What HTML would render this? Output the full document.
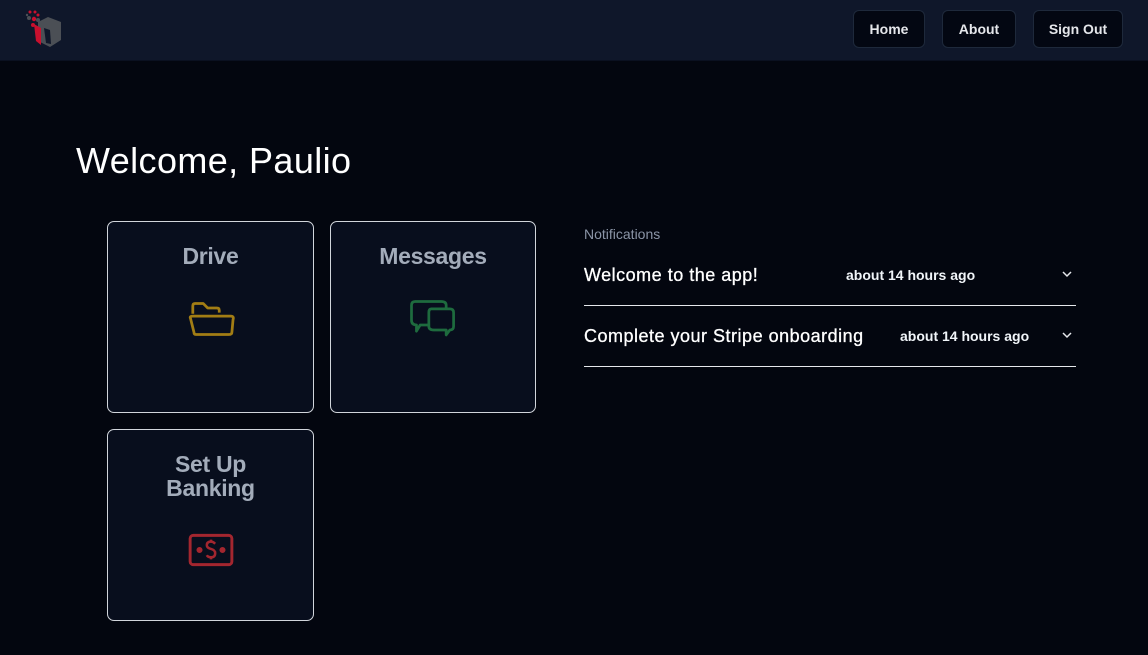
<!DOCTYPE html>
<html><head><style>
*{box-sizing:border-box;margin:0;padding:0}
body{width:1148px;height:655px;background:#03060f;font-family:"Liberation Sans",sans-serif;color:#fff;position:relative;overflow:hidden}
.hdr{position:absolute;left:0;top:0;width:1148px;height:61px;background:#0f172a;border-bottom:1px solid #0a1020}
.btn{position:absolute;top:10px;height:38px;background:#030712;border:1px solid #1e293b;border-radius:6px;color:#e5e7eb;font-size:14px;font-weight:bold;display:flex;align-items:center;justify-content:center}
h1{position:absolute;left:76px;top:140px;font-size:36px;font-weight:normal;color:#fff;letter-spacing:0.4px}
.card{position:absolute;width:207px;height:192px;background:#080e1d;border:1px solid #d1d5db;border-radius:7px;text-align:center}
.card .t{position:absolute;left:0;right:0;top:22px;font-size:23px;font-weight:bold;color:#a3acba;line-height:24px;letter-spacing:-0.3px}
.card svg{position:absolute}
.lbl{position:absolute;left:584px;top:226px;font-size:14px;color:#8b95a7}
.row{position:absolute;left:584px;width:492px;height:61px;border-bottom:1px solid #e5e7eb}
.row .a{position:absolute;left:0;top:20px;font-size:18px;color:#fff;letter-spacing:0.5px;-webkit-text-stroke:0.3px #fff}
.row .b{position:absolute;top:22px;font-size:14px;font-weight:bold;color:#f1f5f9}
.row svg{position:absolute;right:3px;top:25px}
</style></head><body>
<div class="hdr">
<svg width="40" height="40" viewBox="0 0 40 40" style="position:absolute;left:24px;top:8px">
<polygon points="14,14 24,9 37,14 37,32 26,39 14,33" fill="#4b4f55"/>
<polygon points="10,16 17,20 17,37 12,33" fill="#c8102e"/>
<polygon points="20,20 26,22 27,36 22,35" fill="#0f172a"/>
<circle cx="6" cy="4" r="1.5" fill="#c8102e"/><circle cx="11" cy="4" r="1.5" fill="#c8102e"/><circle cx="5" cy="10" r="2" fill="#4b4f55"/><circle cx="10" cy="11" r="2.2" fill="#c8102e"/><circle cx="14" cy="7" r="1.5" fill="#c8102e"/><circle cx="14" cy="12" r="2" fill="#4b4f55"/><circle cx="9" cy="17" r="2" fill="#c8102e"/><circle cx="3" cy="7" r="1.2" fill="#4b4f55"/>
</svg>
<div class="btn" style="left:853px;width:72px">Home</div>
<div class="btn" style="left:942px;width:74px">About</div>
<div class="btn" style="left:1033px;width:90px">Sign Out</div>
</div>
<h1>Welcome, Paulio</h1>
<div class="card" style="left:107px;top:221px"><div class="t">Drive</div>
<svg width="53" height="46" viewBox="0 0 46 40" style="left:79px;top:78px" fill="none" stroke="#a27d14" stroke-width="2.4" stroke-linejoin="round"><path d="M5 12 V5 Q5 3 7 3 H14 L18 7 H26 Q28 7 28 9 V11"/><path d="M3 13 Q2 11 5 11 H38 Q41 11 40 14 L39 25 Q39 27 36 27 H8 Q6 27 6 25 Z" transform="translate(0,3)"/></svg>
</div>
<div class="card" style="left:330px;top:221px;width:206px"><div class="t">Messages</div>
<svg width="57" height="52" viewBox="0 0 46 42" style="left:78px;top:77px" fill="none" stroke="#1e6b3e" stroke-width="2.2" stroke-linejoin="round"><path d="M17 21 H9 L6 26 V21 Q2 21 2 17 V5 Q2 2 5 2 H26 Q30 2 30 5 V8"/><path d="M18 8 H33 Q36 8 36 11 V22 Q36 25 33 25 L30 29 V25 H20 Q16 25 16 22 V11 Q16 8 18 8 Z"/></svg>
</div>
<div class="card" style="left:107px;top:429px"><div class="t">Set Up<br>Banking</div>
<svg width="48" height="36" viewBox="0 0 46 34" style="left:79px;top:102px" fill="none" stroke="#a3262f" stroke-width="2.8"><rect x="3" y="3" width="40" height="28" rx="3"/><circle cx="12" cy="17" r="1.5" fill="#a3262f"/><circle cx="34" cy="17" r="1.5" fill="#a3262f"/><path d="M27 11 Q25 9 23 9 Q19 9 19 12.5 Q19 15 23 16 Q27 17 27 20 Q27 24 23 24 Q20 24 19 22 M23 7 V9 M23 24 V26" stroke-width="2.4"/></svg>
</div>
<div class="lbl">Notifications</div>
<div class="row" style="top:245px"><div class="a">Welcome to the app!</div><div class="b" style="left:262px">about 14 hours ago</div>
<svg width="12" height="8" viewBox="0 0 12 8" fill="none" stroke="#e5e7eb" stroke-width="1.5"><path d="M2 2 L6 6 L10 2"/></svg></div>
<div class="row" style="top:306px"><div class="a">Complete your Stripe onboarding</div><div class="b" style="left:316px">about 14 hours ago</div>
<svg width="12" height="8" viewBox="0 0 12 8" fill="none" stroke="#e5e7eb" stroke-width="1.5"><path d="M2 2 L6 6 L10 2"/></svg></div>
</body></html>
